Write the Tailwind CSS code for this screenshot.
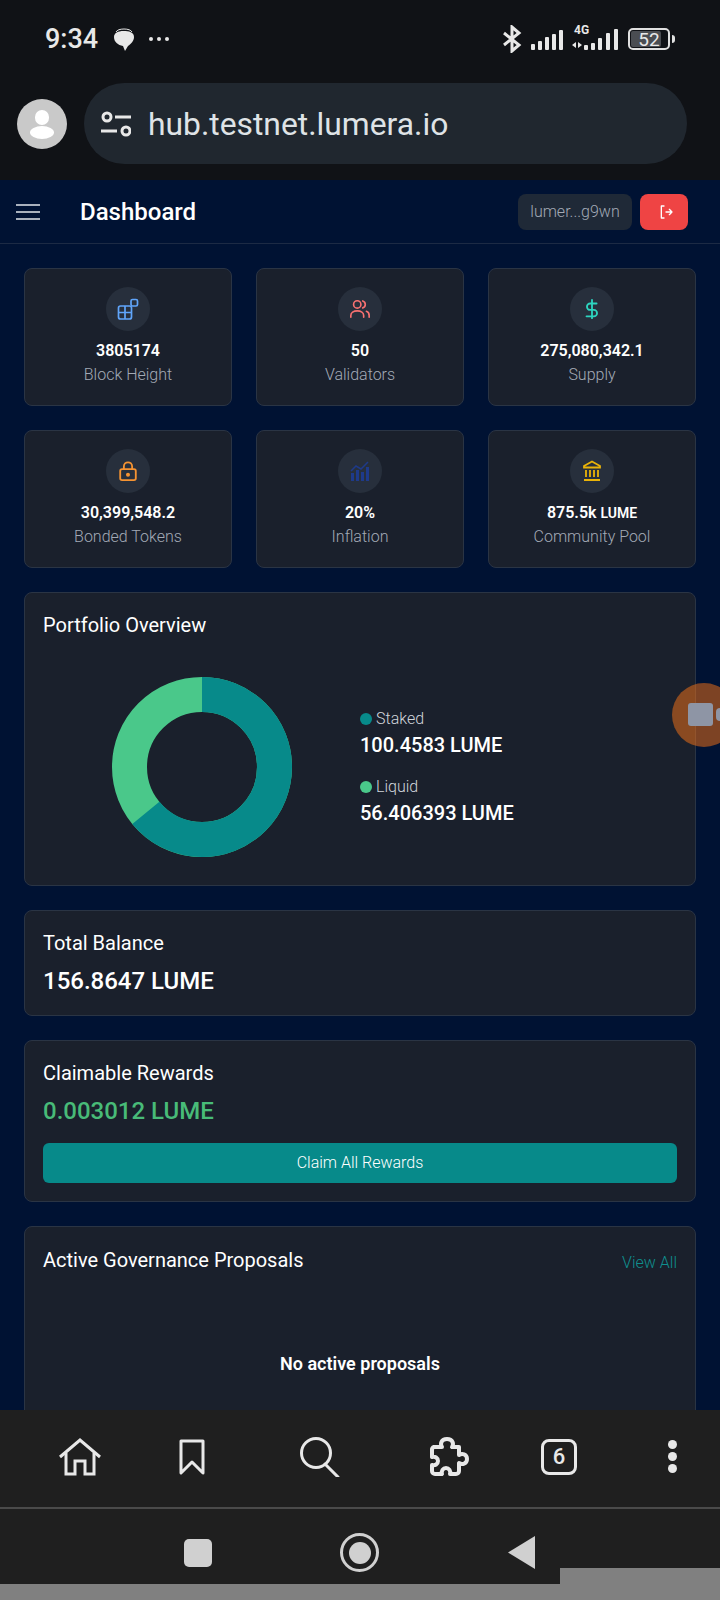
<!DOCTYPE html>
<html lang="en">
<head>
  <meta charset="UTF-8" />
  <title>Dashboard</title>
  <script src="https://cdn.jsdelivr.net/npm/@tailwindcss/browser@4"></script>
</head>
<body class="bg-[#808080] font-['Roboto',sans-serif]">
<div class="relative w-[720px] h-[1600px] overflow-hidden flex flex-col">

  <!-- browser chrome -->
  <div class="h-[180px] shrink-0 bg-[#101216] text-[#e8e8e8]">
    <div class="h-[83px] flex items-start pt-[24px] pl-[45px] pr-[45px]">
      <span class="text-[27px] leading-[30px] font-medium w-[68px]">9:34</span>
      <svg width="22" height="24" viewBox="0 0 22 24" class="mt-[4px]"><path d="M10.500 3C16 3 21 4 21 9c0 4-3 7-6 9l-3 5-2-5C5 17 1 14 1 9c0-4 4-6 9.500-6z" fill="#e8e8e8"/><path d="M3 4c1-2 4-3 8-3s7 1 8 3" fill="none" stroke="#e8e8e8" stroke-width="1"/></svg>
      <div class="flex gap-[4px] ml-[14px] mt-[13px]"><i class="w-[4px] h-[4px] rounded-full bg-[#e8e8e8]"></i><i class="w-[4px] h-[4px] rounded-full bg-[#e8e8e8]"></i><i class="w-[4px] h-[4px] rounded-full bg-[#e8e8e8]"></i></div>
      <div class="ml-auto flex items-center h-[30px]">
        <svg width="20" height="28" viewBox="0 0 20 28" fill="none" stroke="#e8e8e8" stroke-width="3"><path d="M2 8l15 12-7 6V2l7 6L2 20"/></svg>
        <svg width="32" height="20" viewBox="0 0 32 20" fill="#e8e8e8" class="ml-[9px] mt-[2px]"><rect x="0" y="14" width="4" height="6" rx="1"/><rect x="7" y="11" width="4" height="9" rx="1"/><rect x="14" y="7" width="4" height="13" rx="1"/><rect x="21" y="4" width="4" height="16" rx="1"/><rect x="28" y="0" width="4" height="20" rx="1"/></svg>
        <div class="relative w-[48px] h-[30px] ml-[9px]">
          <span class="absolute left-[2px] top-[-1px] text-[12px] leading-[14px] font-bold">4G</span>
          <svg width="48" height="30" viewBox="0 0 48 30" fill="#e8e8e8"><path d="M0 21l4-3v6zM6 18l4 3-4 3z"/><rect x="12" y="21" width="4" height="5" rx="1"/><rect x="19" y="19" width="4" height="7" rx="1"/><rect x="26" y="14" width="4" height="12" rx="1"/><rect x="34" y="9" width="4" height="17" rx="1"/><rect x="42" y="5" width="4" height="21" rx="1"/></svg>
        </div>
        <div class="ml-[8px] w-[42px] h-[22px] rounded-[5px] border-2 border-[#e0e0e0] p-[1px] flex">
          <div class="w-[30px] h-full rounded-[2px] bg-[#4a4d52]"></div>
          <span class="absolute w-[36px] text-center text-[19px] leading-[18px]">52</span>
        </div>
        <div class="w-[3px] h-[8px] ml-[2px] rounded-r-sm bg-[#e0e0e0]"></div>
      </div>
    </div>
    <div class="flex items-center pl-[17px] pr-[33px] gap-[17px]">
      <div class="relative w-[50px] h-[50px] rounded-full bg-[#c9c9c9] overflow-hidden shrink-0">
        <div class="absolute left-[18px] top-[11px] w-[14px] h-[15px] rounded-full bg-white"></div>
        <div class="absolute left-[13px] top-[27px] w-[24px] h-[13px] rounded-[50%] bg-white"></div>
      </div>
      <div class="flex-1 h-[81px] rounded-full bg-[#20272f] flex items-center pl-[17px]">
        <svg width="30" height="26" viewBox="0 0 30 26" fill="none" stroke="#e8e8e8" stroke-width="3"><circle cx="6" cy="6" r="4"/><path d="M14 6h16M0 20h16"/><circle cx="25" cy="20" r="4"/></svg>
        <span class="ml-[17px] text-[31.800px] leading-[40px] text-[#dfe3e6]">hub.testnet.lumera.io</span>
      </div>
    </div>
  </div>

  <!-- page -->
  <div class="flex-1 min-h-0 overflow-hidden bg-[#001233] text-white">
    <header class="h-[64px] border-b border-[#1c2a44] flex items-center pl-[16px] pr-[32px]">
      <div class="w-[24px] flex flex-col gap-[5px]"><i class="h-[2px] bg-[#a9b1bd]"></i><i class="h-[2px] bg-[#a9b1bd]"></i><i class="h-[2px] bg-[#a9b1bd]"></i></div>
      <h1 class="ml-[40px] text-2xl font-medium">Dashboard</h1>
      <div class="ml-auto w-[114px] h-[36px] rounded-lg bg-[#1f2937] flex items-center justify-center text-[16px] font-light text-[#a3aab6]">lumer...g9wn</div>
      <div class="ml-[8px] w-[48px] h-[36px] rounded-lg bg-[#ef4444] flex items-center justify-center">
        <svg width="16" height="16" viewBox="0 0 24 24" fill="none" stroke="#fff" stroke-width="2" stroke-linecap="round" stroke-linejoin="round" class="ml-[4px]"><path d="M9 3H5v18h4M12 12h9M17 8l4 4-4 4"/></svg>
      </div>
    </header>

    <main class="p-6 flex flex-col gap-6">
      <div class="grid grid-cols-3 gap-6">
        <div class="h-[138px] rounded-lg border border-[#2a3444] bg-[#1a202c] pt-[18px] flex flex-col items-center">
          <div class="w-[44px] h-[44px] rounded-full bg-[#272f3c] flex items-center justify-center">
            <svg width="22" height="22" viewBox="0 0 22 22" fill="none" stroke="#60a5fa" stroke-width="1.700" stroke-linejoin="round"><rect x="1.500" y="8" width="13" height="13" rx="2"/><path d="M8 8v13M1.500 14.500h13"/><rect x="14" y="1.500" width="6.500" height="6.500" rx="1.500"/></svg>
          </div>
          <div class="mt-[8px] text-base font-semibold leading-6">3805174</div>
          <div class="text-base font-light leading-6 text-[#a3aab6]">Block Height</div>
        </div>
        <div class="h-[138px] rounded-lg border border-[#2a3444] bg-[#1a202c] pt-[18px] flex flex-col items-center">
          <div class="w-[44px] h-[44px] rounded-full bg-[#272f3c] flex items-center justify-center">
            <svg width="22" height="22" viewBox="0 0 24 24" fill="none" stroke="#f87171" stroke-width="1.800" stroke-linecap="round"><circle cx="9" cy="7" r="4"/><path d="M2 21v-2c0-3 3-5 7-5s7 2 7 5v2M15 3.200a4 4 0 0 1 0 7.600M19 14.500c2 .7 3 2.500 3 4.500v2"/></svg>
          </div>
          <div class="mt-[8px] text-base font-semibold leading-6">50</div>
          <div class="text-base font-light leading-6 text-[#a3aab6]">Validators</div>
        </div>
        <div class="h-[138px] rounded-lg border border-[#2a3444] bg-[#1a202c] pt-[18px] flex flex-col items-center">
          <div class="w-[44px] h-[44px] rounded-full bg-[#272f3c] flex items-center justify-center">
            <svg width="22" height="22" viewBox="0 0 24 24" fill="none" stroke="#2dd4bf" stroke-width="2" stroke-linecap="round"><path d="M12 2v20M17 6H10a3.500 3.500 0 0 0 0 7h4a3.500 3.500 0 0 1 0 7H6"/></svg>
          </div>
          <div class="mt-[8px] text-base font-semibold leading-6">275,080,342.1</div>
          <div class="text-base font-light leading-6 text-[#a3aab6]">Supply</div>
        </div>
        <div class="h-[138px] rounded-lg border border-[#2a3444] bg-[#1a202c] pt-[18px] flex flex-col items-center">
          <div class="w-[44px] h-[44px] rounded-full bg-[#272f3c] flex items-center justify-center">
            <svg width="22" height="22" viewBox="0 0 24 24" fill="none" stroke="#f59332" stroke-width="2"><rect x="3.500" y="10" width="17" height="12" rx="2"/><path d="M7.500 10V7a4.500 4.500 0 0 1 9 0v3"/><circle cx="12" cy="16" r="1.200" fill="#f59332"/></svg>
          </div>
          <div class="mt-[8px] text-base font-semibold leading-6">30,399,548.2</div>
          <div class="text-base font-light leading-6 text-[#a3aab6]">Bonded Tokens</div>
        </div>
        <div class="h-[138px] rounded-lg border border-[#2a3444] bg-[#1a202c] pt-[18px] flex flex-col items-center">
          <div class="w-[44px] h-[44px] rounded-full bg-[#272f3c] flex items-center justify-center">
            <svg width="20" height="20" viewBox="0 0 20 20" fill="#1e3a8a"><rect x="1" y="12" width="3" height="8"/><rect x="6" y="9" width="3" height="11"/><rect x="11" y="11" width="3" height="9"/><rect x="16" y="6" width="3" height="14"/><path d="M1 10l5-5 5 3 7-7" fill="none" stroke="#1e3a8a" stroke-width="1.500"/></svg>
          </div>
          <div class="mt-[8px] text-base font-semibold leading-6">20%</div>
          <div class="text-base font-light leading-6 text-[#a3aab6]">Inflation</div>
        </div>
        <div class="h-[138px] rounded-lg border border-[#2a3444] bg-[#1a202c] pt-[18px] flex flex-col items-center">
          <div class="w-[44px] h-[44px] rounded-full bg-[#272f3c] flex items-center justify-center">
            <svg width="20" height="22" viewBox="0 0 20 22" fill="none" stroke="#eab308" stroke-width="1.800"><path d="M10 1.500L2 6v1.500h16V6z"/><path d="M4 10v7M8 10v7M12 10v7M16 10v7M2 20h16"/></svg>
          </div>
          <div class="mt-[8px] text-base font-semibold leading-6">875.5k <span class="text-sm">LUME</span></div>
          <div class="text-base font-light leading-6 text-[#a3aab6]">Community Pool</div>
        </div>
      </div>

      <section class="h-[294px] rounded-lg border border-[#2a3444] bg-[#1a202c] p-[18px]">
        <h2 class="text-[20px] leading-7">Portfolio Overview</h2>
        <div class="flex items-center mt-[38px]">
          <svg width="180" height="180" viewBox="0 0 180 180" class="ml-[69px] -rotate-90">
            <circle cx="90" cy="90" r="72.500" fill="none" stroke="#4ac88a" stroke-width="35"/>
            <circle cx="90" cy="90" r="72.500" fill="none" stroke="#078a8a" stroke-width="35" stroke-dasharray="291.500 455.500"/>
          </svg>
          <div class="ml-[68px] flex flex-col gap-[16px]">
            <div>
              <div class="flex items-center gap-[4px] text-base font-light leading-6 text-[#d1d5db]"><i class="w-[12px] h-[12px] rounded-full bg-[#078a8a]"></i>Staked</div>
              <div class="text-[20px] leading-7 font-medium">100.4583 LUME</div>
            </div>
            <div>
              <div class="flex items-center gap-[4px] text-base font-light leading-6 text-[#d1d5db]"><i class="w-[12px] h-[12px] rounded-full bg-[#4ac88a]"></i>Liquid</div>
              <div class="text-[20px] leading-7 font-medium">56.406393 LUME</div>
            </div>
          </div>
        </div>
      </section>

      <section class="h-[106px] rounded-lg border border-[#2a3444] bg-[#1a202c] p-[18px]">
        <h2 class="text-[20px] leading-7">Total Balance</h2>
        <div class="mt-[8px] text-2xl leading-8 font-medium">156.8647 LUME</div>
      </section>

      <section class="h-[162px] rounded-lg border border-[#2a3444] bg-[#1a202c] p-[18px]">
        <h2 class="text-[20px] leading-7">Claimable Rewards</h2>
        <div class="mt-[8px] text-2xl leading-8 font-medium text-[#48bb78]">0.003012 LUME</div>
        <button class="mt-[16px] w-full h-[40px] rounded-md bg-[#078a8a] text-base font-light text-white">Claim All Rewards</button>
      </section>

      <section class="h-[300px] rounded-lg border border-[#2a3444] bg-[#1a202c] p-[18px]">
        <div class="flex items-center justify-between">
          <h2 class="text-[20px] leading-7">Active Governance Proposals</h2>
          <a class="text-base font-light text-[#0f8f8f] mt-[6px]">View All</a>
        </div>
        <p class="mt-[75px] text-center text-lg leading-7 font-semibold">No active proposals</p>
      </section>
    </main>
  </div>

  <!-- browser toolbar -->
  <div class="h-[99px] shrink-0 bg-[#1f1f1f] border-b-2 border-[#4a4a4a] flex items-center pl-[24px] pb-[4px] text-[#e8e8e8]">
    <div class="w-[112px] shrink-0 flex justify-center">
      <svg width="42" height="38" viewBox="0 0 42 38" fill="none" stroke="#e8e8e8" stroke-width="3"><path d="M1 19L21 2l20 17"/><path d="M7 15v21h9V23h10v13h9V15"/></svg>
    </div>
    <div class="w-[112px] shrink-0 flex justify-center">
      <svg width="26" height="36" viewBox="0 0 26 36" fill="none" stroke="#e8e8e8" stroke-width="3" stroke-linejoin="round"><path d="M2 2h22v32L13 23 2 34z"/></svg>
    </div>
    <div class="w-[144px] shrink-0 flex justify-center">
      <svg width="40" height="40" viewBox="0 0 40 40" fill="none" stroke="#e8e8e8" stroke-width="3"><circle cx="16" cy="16" r="14.500"/><path d="M25 27l13 13" stroke-linecap="round"/></svg>
    </div>
    <div class="w-[112px] shrink-0 flex justify-center">
      <svg width="42" height="40" viewBox="0 0 42 40" fill="none" stroke="#e8e8e8" stroke-width="4" stroke-linejoin="round"><path d="M7 10h8c-2-3-1-8 5-8s7 5 5 8h7v8c3-2 8-1 8 4s-5 6-8 4v8a3 3 0 0 1-3 3h-6c1-3-1-6-4-6s-5 3-4 6H8a3 3 0 0 1-3-3v-6c3 1 6-1 6-4s-3-5-6-4v-7a3 3 0 0 1 2-3z"/></svg>
    </div>
    <div class="w-[110px] shrink-0 flex justify-center">
      <div class="w-[36px] h-[36px] rounded-[8px] border-[3px] border-[#e8e8e8] flex items-center justify-center text-[22px] leading-none font-medium">6</div>
    </div>
    <div class="w-[116px] shrink-0 flex justify-center">
      <div class="flex flex-col gap-[3px]"><i class="w-[9px] h-[9px] rounded-full bg-[#e8e8e8]"></i><i class="w-[9px] h-[9px] rounded-full bg-[#e8e8e8]"></i><i class="w-[9px] h-[9px] rounded-full bg-[#e8e8e8]"></i></div>
    </div>
  </div>

  <!-- android nav -->
  <div class="h-[75px] shrink-0 bg-[#1f1f1f] flex items-start pt-[30px]">
    <div class="ml-[184px] w-[28px] h-[28px] rounded-[5px] bg-[#d0d0d0]"></div>
    <div class="ml-[128px] -mt-[6px] w-[39px] h-[39px] rounded-full border-[3px] border-[#d0d0d0] flex items-center justify-center"><div class="w-[22px] h-[22px] rounded-full bg-[#d0d0d0]"></div></div>
    <svg width="28" height="33" viewBox="0 0 28 33" class="ml-[129px] -mt-[3px]"><path d="M0 16.500L27 0v33z" fill="#d0d0d0"/></svg>
  </div>
  <div class="h-[16px] shrink-0 bg-[#808080]"></div>

  <!-- overlays -->
  <div class="absolute left-[560px] top-[1568px] w-[160px] h-[32px] bg-[#808080]"></div>
  <div class="absolute left-[672px] top-[683px] w-[64px] h-[64px] rounded-full bg-[#f97316]/50"></div>
  <div class="absolute left-[688px] top-[703px] w-[25px] h-[23px] rounded-[3px] bg-[#8e95a5]"></div>
  <div class="absolute left-[716px] top-[708px] w-[8px] h-[13px] rounded-full bg-[#8e95a5]"></div>
</div>
</body>
</html>
